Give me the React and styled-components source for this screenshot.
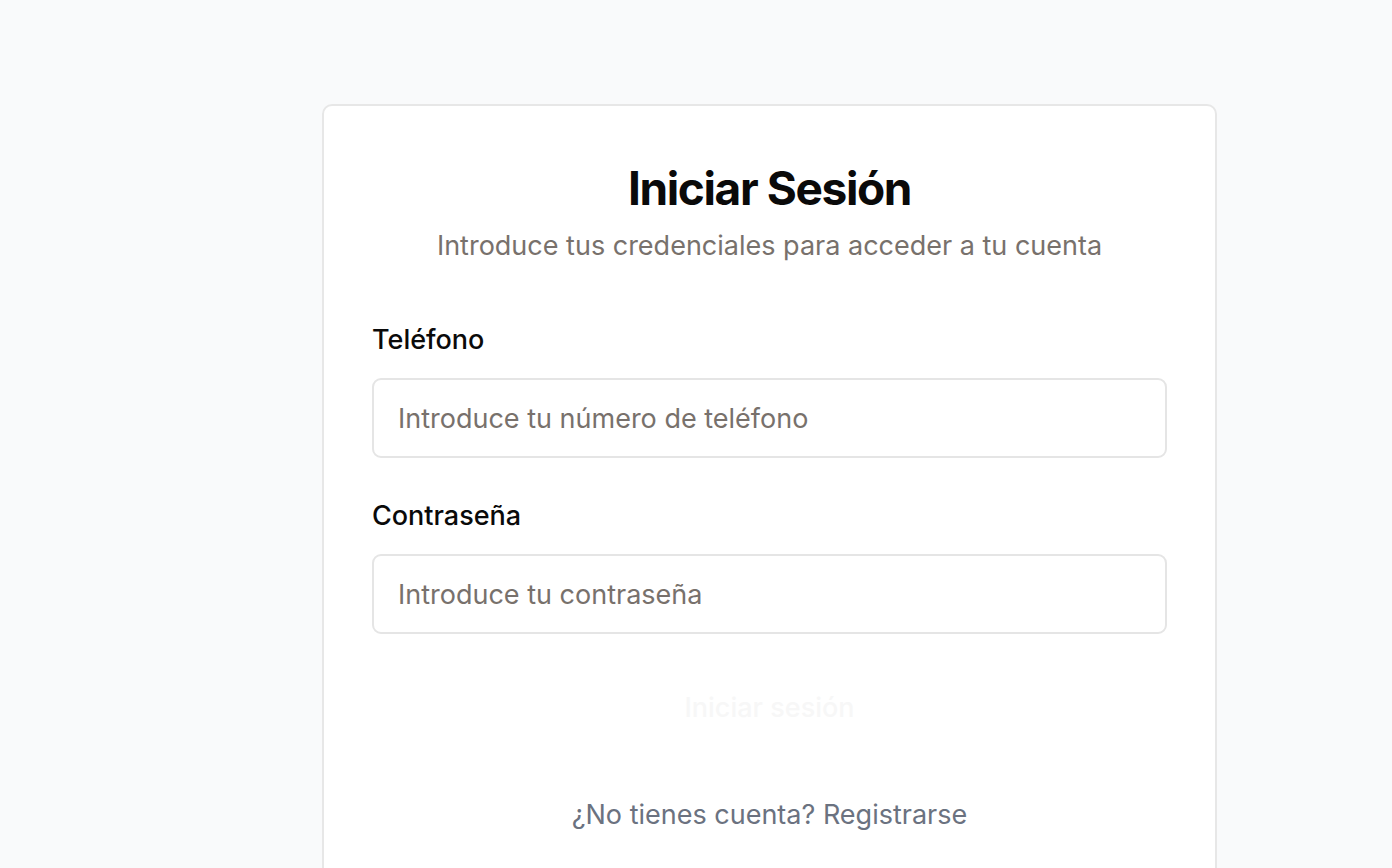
import React from "react"
import styled, { createGlobalStyle } from "styled-components"

const GlobalStyle = createGlobalStyle`
  html, body {
    margin: 0;
    padding: 0;
    background: #f9fafb;
    font-family: Inter, "Noto Sans", "Liberation Sans", sans-serif;
    color: #0a0a0a;
  }
  * {
    box-sizing: border-box;
  }
`

const Page = styled.div`
  height: 868px;
  padding: 104px 175px 0 322px;
  overflow: hidden;
`

const Card = styled.div`
  width: 895px;
  min-height: 900px;
  background: #ffffff;
  border: 2px solid #e7e7e7;
  border-radius: 10px;
  padding: 50px 48px 48px;
  display: flex;
  flex-flow: column nowrap;
`

const Header = styled.div`
  display: flex;
  flex-flow: column nowrap;
  align-items: center;
  gap: 8px;
  margin-bottom: 58px;
`

const Title = styled.h1`
  margin: 0;
  font-size: 46px;
  line-height: 64px;
  font-weight: 700;
  letter-spacing: -0.03em;
  color: #0a0a0a;
`

const Subtitle = styled.p`
  margin: 0;
  font-size: 27px;
  line-height: 36px;
  color: #78716c;
`

const Form = styled.form`
  display: flex;
  flex-flow: column nowrap;
  gap: 40px;
`

const Field = styled.div`
  display: flex;
  flex-flow: column nowrap;
  gap: 20px;
`

const Label = styled.label`
  font-size: 27px;
  line-height: 36px;
  font-weight: 500;
  color: #0a0a0a;
`

const Input = styled.input`
  width: 100%;
  height: 80px;
  padding: 0 24px;
  border: 2px solid #e5e5e5;
  border-radius: 9px;
  background: #ffffff;
  font-family: inherit;
  font-size: 27px;
  color: #0a0a0a;
  outline: none;

  &::placeholder {
    color: #78716c;
  }
`

const SubmitButton = styled.button`
  width: 100%;
  height: 66px;
  border: none;
  background: transparent;
  font-family: inherit;
  font-size: 27px;
  font-weight: 500;
  color: #f7f7f7;
  cursor: pointer;
`

const Footer = styled.p`
  margin: 57px 0 0;
  text-align: center;
  font-size: 27px;
  line-height: 36px;
  color: #6b7280;
`

export default function App() {
  return (
    <>
      <GlobalStyle />
      <Page>
        <Card>
          <Header>
            <Title>Iniciar Sesión</Title>
            <Subtitle>Introduce tus credenciales para acceder a tu cuenta</Subtitle>
          </Header>
          <Form onSubmit={(e) => e.preventDefault()}>
            <Field>
              <Label htmlFor="phone">Teléfono</Label>
              <Input id="phone" type="tel" placeholder="Introduce tu número de teléfono" />
            </Field>
            <Field>
              <Label htmlFor="password">Contraseña</Label>
              <Input id="password" type="password" placeholder="Introduce tu contraseña" />
            </Field>
            <SubmitButton type="submit">Iniciar sesión</SubmitButton>
          </Form>
          <Footer>¿No tienes cuenta? Registrarse</Footer>
        </Card>
      </Page>
    </>
  )
}
